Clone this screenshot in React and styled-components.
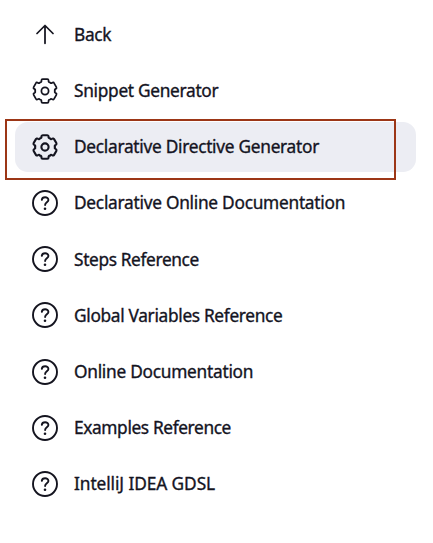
import React from "react";
import styled, { createGlobalStyle } from "styled-components";

const GlobalStyle = createGlobalStyle`
  body {
    margin: 0;
    background: #fff;
    font-family: "Noto Sans", "Open Sans", sans-serif;
    color: #14141f;
  }
`;

const Sidebar = styled.nav`
  box-sizing: border-box;
  width: 433px;
  height: 543px;
  padding: 9.5px 17px 0 15px;
  display: flex;
  flex-direction: column;
  gap: 6.2px;
`;

const Item = styled.a`
  position: relative;
  flex: 0 0 50px;
  display: flex;
  align-items: center;
  gap: 15px;
  padding-left: 16px;
  border-radius: 13px;
  background: ${(p) => (p.$active ? "#ecedf3" : "transparent")};
`;

const Label = styled.span`
  font-size: 17.3px;
  font-weight: 400;
  -webkit-text-stroke: 0.35px currentColor;
  line-height: 24px;
  padding-top: 0.8px;
  white-space: nowrap;
  letter-spacing: ${(p) => p.$tracking}px;
`;

const Highlight = styled.span`
  position: absolute;
  box-sizing: border-box;
  left: -10px;
  top: -3px;
  width: 391px;
  height: 61px;
  border: 2px solid #9c3616;
`;

const Icon = styled.svg.attrs({ viewBox: "-14 -14 28 28" })`
  flex: none;
  width: 28px;
  height: 28px;
  fill: none;
  stroke: currentColor;
  stroke-width: ${(p) => p.$weight || 1.75};
  stroke-linecap: round;
  stroke-linejoin: round;
`;

const ArrowUp = () => (
  <Icon>
    <path d="M-8 -1.5 0 -9.5 8 -1.5M0 -9.3V8.3" />
  </Icon>
);

const polar = (r, deg) => {
  const a = (deg * Math.PI) / 180;
  return `${(r * Math.cos(a)).toFixed(2)} ${(r * Math.sin(a)).toFixed(2)}`;
};

const gearPath =
  [0, 1, 2, 3, 4, 5]
    .map((i) => {
      const c = -90 + i * 60;
      return `${i ? "L" : "M"}${polar(12, c - 11)}L${polar(12, c + 11)}Q${polar(12.3, c + 17)} ${polar(11, c + 19)}Q${polar(9.2, c + 21)} ${polar(10, c + 30)}Q${polar(9.2, c + 39)} ${polar(11, c + 41)}Q${polar(12.3, c + 43)} ${polar(12, c + 49)}`;
    })
    .join("") + "Z";

const Gear = ({ active }) => (
  <Icon $weight={active ? 2.1 : 1.75}>
    <path d={gearPath} />
    <circle r="3.6" />
  </Icon>
);

const Help = () => (
  <Icon $weight={1.9}>
    <circle r="12" />
    <path d="M-3.2 -3.2C-3 -5 -1.7 -5.8 .1 -5.8C2 -5.8 3.4 -4.7 3.4 -3C3.4 -.8 .1 -.5 .1 2" />
    <circle cx="0" cy="5.7" r="1.3" fill="currentColor" stroke="none" />
  </Icon>
);

const items = [
  ["Back", ArrowUp, -0.3],
  ["Snippet Generator", Gear, -0.3],
  ["Declarative Directive Generator", Gear, -0.28],
  ["Declarative Online Documentation", Help, -0.26],
  ["Steps Reference", Help, -0.36],
  ["Global Variables Reference", Help, -0.32],
  ["Online Documentation", Help, -0.26],
  ["Examples Reference", Help, -0.37],
  ["IntelliJ IDEA GDSL", Help, -0.08],
];

export default function App() {
  return (
    <>
      <GlobalStyle />
      <Sidebar>
        {items.map(([label, Glyph, tracking], i) => (
          <Item key={label} $active={i === 2}>
            <Glyph active={i === 2} />
            <Label $tracking={tracking}>{label}</Label>
            {i === 2 && <Highlight />}
          </Item>
        ))}
      </Sidebar>
    </>
  );
}
